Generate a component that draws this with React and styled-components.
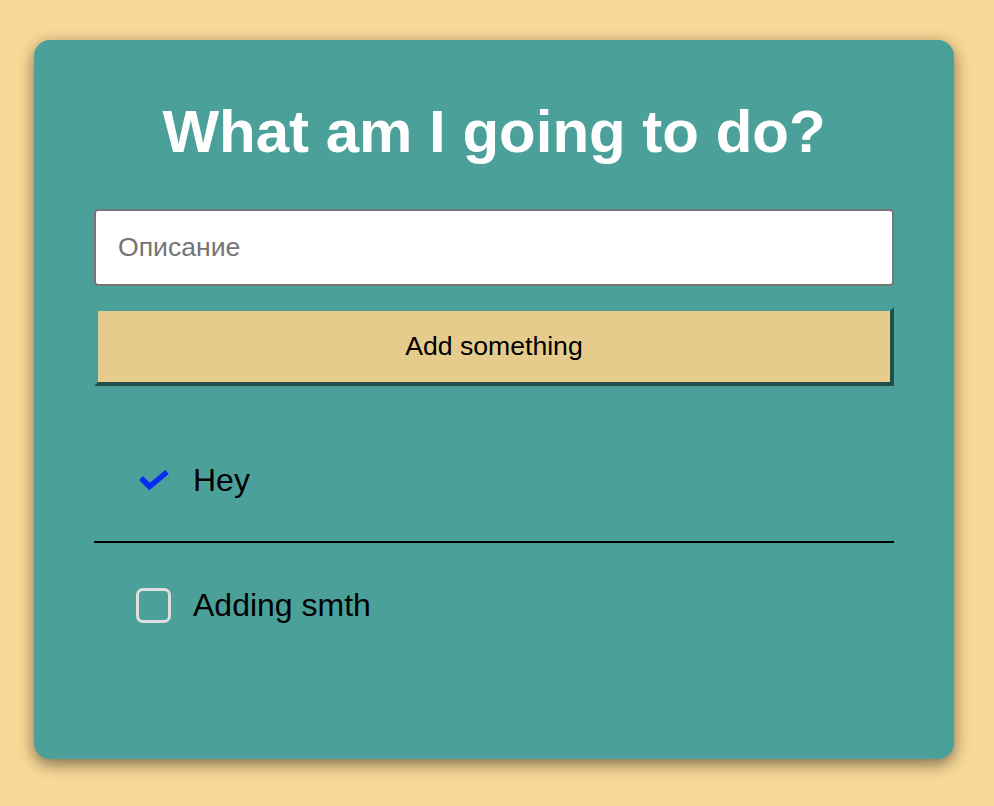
import styled, { createGlobalStyle } from 'styled-components'

const GlobalStyle = createGlobalStyle`
    * {
        box-sizing: border-box;
    }
    body {
        margin: 0;
        background-color: #f9d898;
        font-family: 'Liberation Sans', Arial, sans-serif;
    }
`

const Page = styled.div`
    padding: 40px 0 47px 34px;
`

const Card = styled.div`
    width: 920px;
    min-height: 719px;
    padding: 62px 60px 0;
    background-color: #4ba19a;
    border-radius: 16px;
    box-shadow: 0 5px 16px rgba(0, 0, 0, 0.5);
`

const Title = styled.h1`
    margin: 0 0 47px;
    font-size: 60px;
    line-height: 1;
    font-weight: 700;
    color: #ffffff;
    text-align: center;
`

const Form = styled.form`
    display: flex;
    flex-direction: column;
    gap: 21px;
`

const Input = styled.input`
    height: 77px;
    width: 100%;
    padding: 0 22px;
    border: 2px solid #767676;
    border-radius: 4px;
    background: #ffffff;
    font-family: inherit;
    font-size: 26.6px;
    color: #222;
    outline: none;

    &::placeholder {
        color: #757575;
    }
`

const AddButton = styled.button`
    height: 79px;
    width: 100%;
    border: 4px solid transparent;
    border-right-color: #234f4a;
    border-bottom-color: #234f4a;
    background-color: #e5cc8c;
    background-clip: padding-box;
    font-family: inherit;
    font-size: 26.6px;
    color: #000;
    cursor: pointer;
`

const TodoList = styled.ul`
    list-style: none;
    margin: 33px 0 0;
    padding: 0;
`

const TodoItem = styled.li`
    display: flex;
    align-items: center;
    gap: 22px;
    height: 124px;
    padding-left: 42px;
    border-bottom: ${(p) => (p.$divider ? '2px solid #000' : 'none')};
`

const CheckBox = styled.span`
    display: flex;
    align-items: center;
    justify-content: center;
    width: 35px;
    height: 35px;
    border: ${(p) => (p.$done ? 'none' : '3px solid #dedede')};
    border-radius: 7px;
`

const TodoText = styled.span`
    font-size: 32px;
    color: #000;
`

function CheckMark() {
    return (
        <svg width="32" height="22" viewBox="0 0 32 22">
            <path
                d="M3 9 L11.5 17.5 L29 3"
                fill="none"
                stroke="#0a2bf5"
                strokeWidth="5.5"
            />
        </svg>
    )
}

const todos = [
    { text: 'Hey', done: true },
    { text: 'Adding smth', done: false },
]

export default function App() {
    return (
        <>
            <GlobalStyle />
            <Page>
                <Card>
                    <Title>What am I going to do?</Title>
                    <Form onSubmit={(e) => e.preventDefault()}>
                        <Input placeholder="Описание" />
                        <AddButton type="submit">Add something</AddButton>
                    </Form>
                    <TodoList>
                        {todos.map((todo, i) => (
                            <TodoItem key={todo.text} $divider={i < todos.length - 1}>
                                <CheckBox $done={todo.done}>
                                    {todo.done && <CheckMark />}
                                </CheckBox>
                                <TodoText>{todo.text}</TodoText>
                            </TodoItem>
                        ))}
                    </TodoList>
                </Card>
            </Page>
        </>
    )
}
